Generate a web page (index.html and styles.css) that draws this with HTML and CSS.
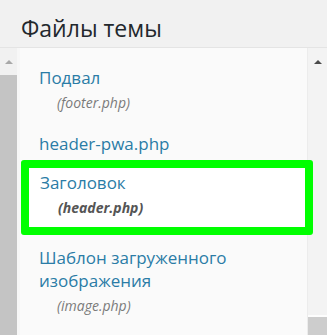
FILE: index.html
```html
<!DOCTYPE html>
<html lang="ru">
  <head>
    <meta charset="UTF-8" />
    <meta name="viewport" content="width=device-width, initial-scale=1.0" />
    <title>Файлы темы</title>
    <link rel="stylesheet" href="styles.css">
  </head>
  <body>
    <div class="page">
      <h2 class="title">Файлы темы</h2>
      <div class="browser">
        <div class="scroll scroll-left">
          <span class="arrow"></span>
          <div class="thumb"></div>
        </div>
        <ul class="files">
          <li class="file">
            <a href="#">Подвал</a>
            <span class="name">(footer.php)</span>
          </li>
          <li class="file">
            <a href="#">header-pwa.php</a>
          </li>
          <li class="file current">
            <a href="#">Заголовок</a>
            <span class="name">(header.php)</span>
          </li>
          <li class="file">
            <a href="#">Шаблон загруженного изображения</a>
            <span class="name">(image.php)</span>
          </li>
        </ul>
        <div class="scroll scroll-right">
          <span class="arrow"></span>
          <div class="thumb"></div>
        </div>
      </div>
    </div>
  </body>
</html>
```
FILE: styles.css
```css
body {
  margin: 0;
  background-color: #f1f1f1;
  font-family: "Open Sans", "Noto Sans", sans-serif;
  overflow: hidden;
}
.page {
  height: 335px;
  display: flex;
  flex-direction: column;
}
.title {
  margin: 0;
  height: 49px;
  padding: 12px 0 0 21px;
  box-sizing: border-box;
  font-size: 23px;
  font-weight: 400;
  color: #23282d;
  border-bottom: 1px solid #e4e4e4;
}
.browser {
  flex: 1;
  display: flex;
}
.scroll {
  display: flex;
  flex-direction: column;
  align-items: center;
}
.scroll-left {
  width: 17px;
  border-right: 3px solid #f7f7f7;
}
.scroll-right {
  width: 19px;
  border-left: 1px solid #ececec;
  background: #f3f3f3;
}
.arrow {
  margin-top: 12px;
  width: 0;
  height: 0;
  border-left: 4px solid transparent;
  border-right: 4px solid transparent;
  border-bottom: 4px solid #a8a8a8;
}
.scroll-right .arrow {
  border-bottom-color: #4a4a4a;
}
.thumb {
  align-self: stretch;
  background: #c4c4c4;
}
.scroll-left .thumb {
  margin-top: 11px;
  flex: 1;
}
.scroll-right .thumb {
  margin-top: 251px;
  flex: 1;
  border-top: 2px solid #fdfdfd;
  background: #cdcdcd;
}
.files {
  flex: 1;
  list-style: none;
  margin: 0;
  padding: 18px 0 0;
  background: #fafafa;
}
.file {
  padding: 0 10px 0 19px;
  margin-bottom: 5px;
}
.file a {
  display: block;
  font-size: 17px;
  line-height: 23px;
  color: #2a7ca6;
  text-decoration: none;
}
.name {
  display: block;
  padding: 0 0 15px 18px;
  margin-top: 5px;
  font-size: 14px;
  line-height: 18px;
  font-style: italic;
  color: #7a7a7a;
}
/* green highlight sits over the right scrollbar */
.current {
  position: relative;
  margin: 0 -6px 11px 1px;
  padding: 3px 10px 10px 11px;
  border: 8px solid #00ff00;
  border-radius: 3px;
  background: #fff;
}
.current .name {
  padding-bottom: 0;
  font-weight: 700;
  color: #555;
}
```
